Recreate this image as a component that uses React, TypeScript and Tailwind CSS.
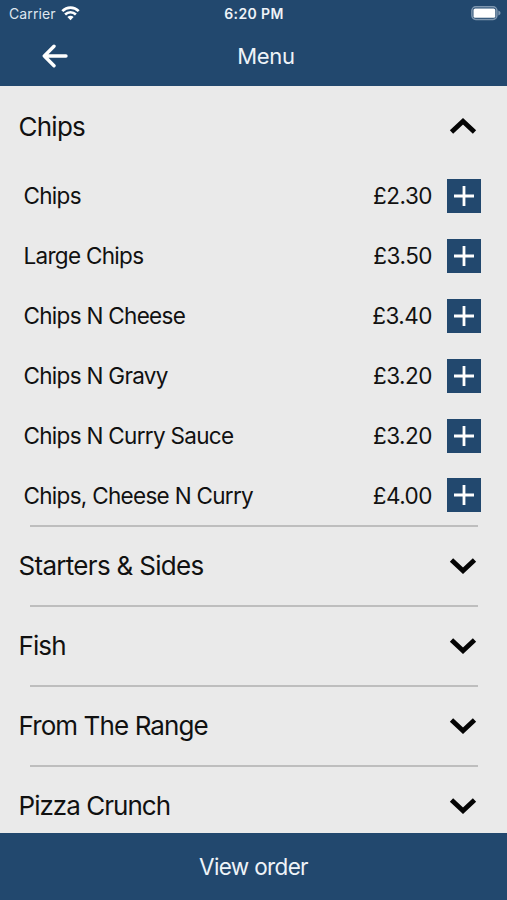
const items = [
  { name: 'Chips', price: '£2.30' },
  { name: 'Large Chips', price: '£3.50' },
  { name: 'Chips N Cheese', price: '£3.40' },
  { name: 'Chips N Gravy', price: '£3.20' },
  { name: 'Chips N Curry Sauce', price: '£3.20' },
  { name: 'Chips, Cheese N Curry', price: '£4.00' },
];

const sections = [
  { title: 'Starters & Sides', tracking: 'tracking-[-0.7px]' },
  { title: 'Fish', tracking: 'tracking-[-0.9px]' },
  { title: 'From The Range', tracking: 'tracking-[-0.9px]' },
  { title: 'Pizza Crunch', tracking: 'tracking-[-0.97px]' },
];

function Chevron({ up = false }: { up?: boolean }) {
  return (
    <svg className="h-[18px] w-7" viewBox="0 0 28 18" fill="none" stroke="#050505" strokeWidth="4.8">
      <path d={up ? 'M2.5 15 14 4.2 25.5 15' : 'M2.5 3 14 13.8 25.5 3'} />
    </svg>
  );
}

function Wifi() {
  return (
    <svg className="ml-[5px] h-[15px] w-[19px]" viewBox="0 0 19 15" fill="none" stroke="white" strokeWidth="2.7">
      <path d="M1.3 5.1C6 .5 13 .5 17.7 5.1" />
      <path d="M4.1 8.4C7.2 5.5 11.8 5.5 14.9 8.4" />
      <path d="M6.4 11C8.2 9.3 10.8 9.3 12.6 11L9.5 14.2Z" fill="white" stroke="none" />
    </svg>
  );
}

function Battery() {
  return (
    <svg className="h-[15px] w-[30px]" viewBox="0 0 30 15">
      <rect x="0.9" y="0.8" width="25" height="12.6" rx="3.8" fill="none" stroke="#7f97b0" strokeWidth="1.5" />
      <rect x="2.5" y="2.4" width="21.8" height="9.4" rx="1.6" fill="white" />
      <path d="M27.3 4.6C28.8 5.1 29.5 6 29.5 7.1S28.8 9.1 27.3 9.6Z" fill="#7f97b0" />
    </svg>
  );
}

export default function App() {
  return (
    <div className="flex h-[900px] w-[507px] flex-col overflow-hidden bg-[#eaeaea] font-['Inter','Liberation_Sans',sans-serif] text-[#111]">
      <header className="h-[86px] shrink-0 bg-[#22486e] text-white">
        <div className="grid h-[27px] grid-cols-3 items-center pr-[6px] pl-[9px]">
          <div className="flex items-center text-[14px] tracking-[0.1px] text-[#dfe6ee]">
            Carrier
            <Wifi />
          </div>
          <div className="pr-[2px] text-center text-[14px] font-semibold tracking-[0.4px] text-[#eef3f8]">6:20 PM</div>
          <div className="flex justify-end">
            <Battery />
          </div>
        </div>
        <div className="grid h-[58px] grid-cols-3 items-center">
          <svg
            className="ml-[42px] h-6 w-[26px]"
            viewBox="0 0 26 24"
            fill="none"
            stroke="white"
            strokeWidth="3.4"
            strokeLinecap="round"
            strokeLinejoin="round"
          >
            <path d="M12 2.3 2.3 12 12 21.7M2.3 12H24" />
          </svg>
          <h1 className="text-center text-[22px] tracking-[-0.3px] text-[#eef3f8]">
            <span className="ml-[25px]">Menu</span>
          </h1>
        </div>
      </header>
      <main className="min-h-0 flex-1 overflow-hidden">
        <div className="flex h-20 items-center justify-between pr-[30px] pl-[18.5px]">
          <h2 className="text-[26px] tracking-[-0.75px]">Chips</h2>
          <Chevron up />
        </div>
        <ul className="h-[359px]">
          {items.map((item) => (
            <li key={item.name} className="flex h-[59.9px] items-center pr-[26px] pl-[23.5px] text-[22.5px] tracking-[-0.7px]">
              <span className="flex-1">{item.name}</span>
              <span className="tracking-[-0.5px]">{item.price}</span>
              <button className="ml-[15px] flex size-[34px] items-center justify-center bg-[#22486e]">
                <svg className="size-5" viewBox="0 0 20 20" stroke="white" strokeWidth="2.8">
                  <path d="M10 0V20M0 10H20" />
                </svg>
              </button>
            </li>
          ))}
        </ul>
        {sections.map(({ title, tracking }) => (
          <section key={title} className="h-20">
            <div className="mr-[29px] ml-[30px] h-[2px] bg-[#bebebe]" />
            <div className="flex h-[78px] items-center justify-between pr-[30px] pl-[18.5px]">
              <h2 className={`pb-px text-[26px] ${tracking}`}>{title}</h2>
              <Chevron />
            </div>
          </section>
        ))}
      </main>
      <footer className="h-[67px] shrink-0 bg-[#22486e]">
        <button className="h-full w-full text-[22.5px] tracking-[-0.65px] text-[#eef3f8]">View order</button>
      </footer>
    </div>
  );
}
